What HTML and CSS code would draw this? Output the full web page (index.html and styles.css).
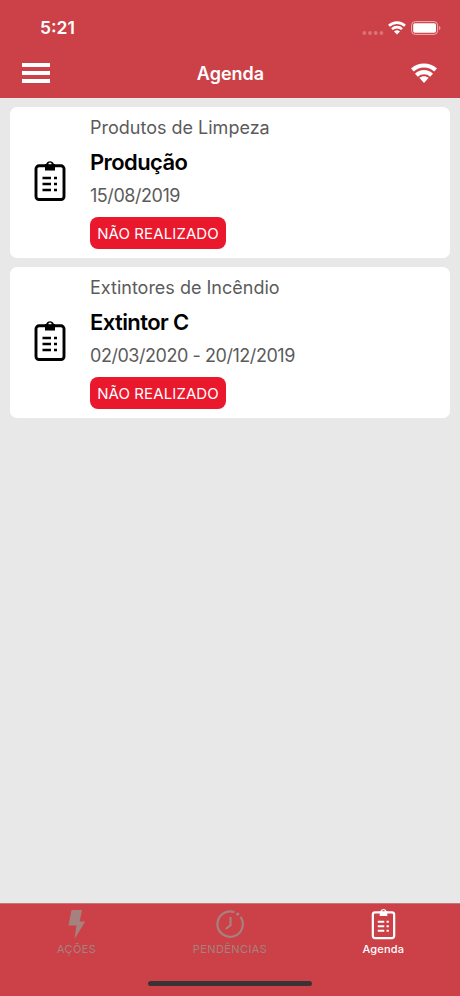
FILE: index.html
```html
<!DOCTYPE html>
<html lang="pt-BR">
<head>
    <meta charset="UTF-8">
    <meta name="viewport" content="width=device-width, initial-scale=1.0">
    <title>Agenda</title>
    <link rel="stylesheet" href="styles.css">
</head>
<body>
    <!-- shared icons -->
    <svg class="sprite">
        <symbol id="clipboard" viewBox="0 0 32 42">
            <rect x="2" y="5.8" width="28" height="33.7" rx="3" fill="none" stroke="currentColor" stroke-width="2.9"/>
            <path fill="currentColor" fill-rule="evenodd" d="M11 4h1.2a4 4 0 0 1 7.6 0H21v6.5H11zM16 2.6a1.7 1.7 0 1 0 0 3.4 1.7 1.7 0 0 0 0-3.4z"/>
            <path stroke="currentColor" stroke-width="2.6" d="M8.5 18H17M20 18h3M8.5 24H17M20 24h3M8.5 30H17M20 30h3"/>
        </symbol>
    </svg>
    <div class="app">
        <header>
            <div class="status">
                <span class="time">5:21</span>
                <div class="signal">
                    <svg class="dots" viewBox="0 0 22 4"><circle cx="2.3" cy="2" r="1.9"/><circle cx="8" cy="2" r="1.9"/><circle cx="13.7" cy="2" r="1.9"/><circle cx="19.4" cy="2" r="1.9"/></svg>
                    <svg class="wifi-small" viewBox="0 0 18 14">
                        <path d="M1 4.8C5.5.5 12.5.5 17 4.8M4 8.1c2.8-2.6 7.2-2.6 10 0"/>
                        <path class="fill" d="M6 10.5c1.8-1.6 4.2-1.6 6 0L9 13.6z"/>
                    </svg>
                    <svg class="battery" viewBox="0 0 30 14">
                        <rect class="shell" x=".6" y=".6" width="26" height="12.8" rx="3.6"/>
                        <rect x="2.2" y="2.2" width="22.8" height="9.6" rx="1.8"/>
                        <path class="cap" d="M28 4.8c2 .8 2 3.6 0 4.4z"/>
                    </svg>
                </div>
            </div>
            <div class="navbar">
                <div class="menu"><span></span><span></span><span></span></div>
                <h1>Agenda</h1>
                <svg class="wifi" viewBox="0 0 26 20">
                    <path d="M1.4 7C8 1 18 1 24.6 7M5.4 12.2c4.4-4 10.8-4 15.2 0"/>
                    <path class="fill" d="M8.3 14.8c2.8-2.1 6.6-2.1 9.4 0L13 20z"/>
                </svg>
            </div>
        </header>
        <main>
            <div class="card">
                <svg class="card-icon"><use href="#clipboard"/></svg>
                <div class="info">
                    <p class="category">Produtos de Limpeza</p>
                    <h2>Produção</h2>
                    <p class="date">15/08/2019</p>
                    <span class="badge">NÃO REALIZADO</span>
                </div>
            </div>
            <div class="card">
                <svg class="card-icon"><use href="#clipboard"/></svg>
                <div class="info">
                    <p class="category">Extintores de Incêndio</p>
                    <h2>Extintor C</h2>
                    <p class="date">02/03/2020 - 20/12/2019</p>
                    <span class="badge">NÃO REALIZADO</span>
                </div>
            </div>
        </main>
        <footer>
            <nav>
                <div class="tab">
                    <svg viewBox="0 0 32 32"><path fill="currentColor" d="M10.5 2h10.5l-2.3 11.5h5.5L13.5 31l2-13.5h-8z"/></svg>
                    <span>AÇÕES</span>
                </div>
                <div class="tab">
                    <svg viewBox="0 0 32 32" fill="none" stroke="currentColor" stroke-width="2.2">
                        <path d="M20.5 4.2A12.7 12.7 0 1 0 26.5 8.8"/>
                        <path d="M16.5 9v8.3l-4.8 3.7"/>
                        <circle cx="23.6" cy="6.1" r="1.7" fill="currentColor" stroke="none"/>
                    </svg>
                    <span>PENDÊNCIAS</span>
                </div>
                <div class="tab active">
                    <svg class="clip"><use href="#clipboard"/></svg>
                    <span>Agenda</span>
                </div>
            </nav>
            <div class="home-bar"></div>
        </footer>
    </div>
</body>
</html>
```

FILE: styles.css
```css
* {
    box-sizing: border-box;
    margin: 0;
    padding: 0;
}
body {
    font-family: Inter, "Liberation Sans", sans-serif;
    background-color: #e8e8e8;
}
svg {
    display: block;
}
.sprite {
    display: none;
}
.app {
    display: flex;
    flex-direction: column;
    height: 996px;
}
header {
    height: 98px;
    background-color: #cb4147;
    color: #fff;
}
.status {
    display: flex;
    justify-content: space-between;
    align-items: center;
    height: 50px;
    padding: 6px 19px 0 40px;
}
.time {
    margin-top: -1px;
    font-size: 17.5px;
    font-weight: 600;
}
.signal {
    display: flex;
    align-items: center;
}
.dots {
    width: 22px;
    height: 4px;
    margin: 9px 4px 0 0;
    fill: #dc7376;
}
.wifi-small {
    width: 18px;
    height: 14px;
    margin-right: 5px;
    fill: none;
    stroke: #fff;
    stroke-width: 2.6;
}
.wifi {
    width: 26px;
    height: 20px;
    fill: none;
    stroke: #fff;
    stroke-width: 4.2;
}
.fill {
    fill: #fff;
    stroke: none;
}
.battery {
    width: 30px;
    height: 14px;
    fill: #fff;
}
.battery .shell {
    fill: none;
    stroke: #eeb0b1;
    stroke-width: 1;
}
.battery .cap {
    fill: #e59a9b;
}
.navbar {
    display: flex;
    justify-content: space-between;
    align-items: center;
    height: 46px;
    padding: 0 23px 0 22px;
}
.menu {
    display: flex;
    flex-direction: column;
    gap: 4px;
    width: 28px;
}
.menu span {
    height: 4px;
    background-color: #fff;
}
h1 {
    font-size: 18px;
    font-weight: 600;
}
main {
    flex: 1;
    display: flex;
    flex-direction: column;
    gap: 9px;
    padding: 9px 10px;
}
.card {
    display: flex;
    height: 151px;
    background-color: #fff;
    border-radius: 7px;
}
.card-icon {
    width: 32px;
    height: 42px;
    margin: 53px 24px 0;
}
.info {
    padding-top: 9px;
}
.category, .date {
    font-size: 18px;
    line-height: 24px;
    color: #5b5b5b;
}
.date {
    letter-spacing: -0.45px;
}
h2 {
    margin: 7px 0;
    font-size: 22px;
    font-weight: 600;
    line-height: 30px;
    letter-spacing: -0.6px;
    color: #000;
}
.badge {
    display: flex;
    justify-content: center;
    align-items: center;
    width: 136px;
    height: 32px;
    margin-top: 9px;
    font-size: 15px;
    letter-spacing: 0.1px;
    color: #fff;
    background-color: #ea182d;
    border-radius: 8px;
}
footer {
    height: 93px;
    background-color: #cb4147;
    border-top: 1px solid #c2767a;
}
nav {
    display: flex;
    height: 79px;
}
.tab {
    flex: 1;
    display: flex;
    flex-direction: column;
    align-items: center;
    padding-top: 4px;
    font-size: 11px;
    color: #a58280;
}
.tab svg {
    width: 32px;
    height: 32px;
}
.tab .clip {
    width: 25px;
}
.tab span {
    margin-top: 2px;
    line-height: 14px;
    letter-spacing: 0.4px;
}
.tab.active {
    color: #fff;
    font-weight: 500;
}
.tab.active span {
    letter-spacing: 0.2px;
}
.home-bar {
    width: 164px;
    height: 5px;
    margin: -2px auto 0;
    background-color: #393335;
    border-radius: 3px;
}
```
